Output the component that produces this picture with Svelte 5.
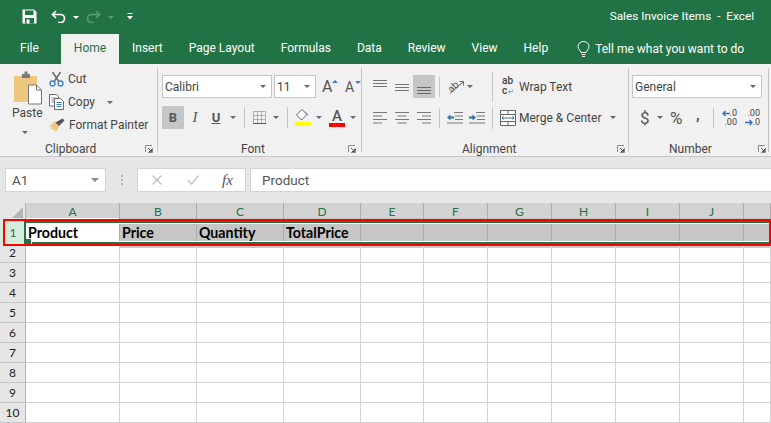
<script>
  const tabs = ['Insert', 'Page Layout', 'Formulas', 'Data', 'Review', 'View', 'Help'];
  const cols = [
    { n: 'A', w: 94, text: 'Product' },
    { n: 'B', w: 77, text: 'Price' },
    { n: 'C', w: 87, text: 'Quantity' },
    { n: 'D', w: 77, text: 'TotalPrice' },
    { n: 'E', w: 63, text: '' },
    { n: 'F', w: 64, text: '' },
    { n: 'G', w: 64, text: '' },
    { n: 'H', w: 64, text: '' },
    { n: 'I', w: 64, text: '' },
    { n: 'J', w: 64, text: '' },
    { n: '', w: 27, text: '' }
  ];
  const rows = [2, 3, 4, 5, 6, 7, 8, 9, 10];
  const template = '26px ' + cols.map((c) => c.w + 'px').join(' ');
</script>

{#snippet launcher()}
  <svg class="launcher" width="8" height="8" viewBox="0 0 8 8">
    <path d="M.5 7V.5H7M7.5 3v4.5H3" fill="none" stroke="#8a8a8a" />
    <path d="M3 3l3 3M4 6.5h2.5V4" fill="none" stroke="#555" />
  </svg>
{/snippet}

<div class="excel">
  <header class="titlebar">
    <div class="qat">
      <svg class="save" width="15" height="15" viewBox="0 0 15 15">
        <path d="M.5.5h11.500l2.500 2.500v11.500H.5z" fill="#fff" />
        <rect x="3" y="1.500" width="8.500" height="4.500" fill="#217346" />
        <rect x="3" y="9" width="9" height="5.500" fill="#217346" />
        <rect x="4.500" y="10.500" width="3" height="4" fill="#fff" />
      </svg>
      <svg class="undo" width="15" height="13" viewBox="0 0 15 13">
        <path d="M5 1L1.500 4.500 5 8M2 4.500h7.500a4 4 0 0 1 0 8H7" fill="none" stroke="#fff" stroke-width="1.700" />
      </svg>
      <i class="caret white"></i>
      <svg class="redo" width="15" height="13" viewBox="0 0 15 13">
        <path d="M10 1l3.500 3.500L10 8M13 4.500H5.500a4 4 0 0 0 0 8H8" fill="none" stroke="#5c9a78" stroke-width="1.700" />
      </svg>
      <i class="caret dim"></i>
      <svg class="custom" width="6" height="7" viewBox="0 0 6 7">
        <path d="M.5.5h5" stroke="#fff" />
        <path d="M0 3h6L3 6.500z" fill="#fff" />
      </svg>
    </div>
    <div class="doc">Sales Invoice Items &nbsp;-&nbsp; Excel</div>
  </header>

  <nav class="tabs">
    <span class="tab file">File</span>
    <span class="tab active">Home</span>
    {#each tabs as tab}
      <span class="tab">{tab}</span>
    {/each}
    <span class="tell">
      <svg width="13" height="17" viewBox="0 0 13 17">
        <path d="M4 11.500C3.500 9.500 1 8.500 1 5.500a5.500 5 0 0 1 11 0c0 3-2.500 4-3 6zM4.500 13.500h4M5 15.500h3" fill="none" stroke="#fff" />
      </svg>
      <span>Tell me what you want to do</span>
    </span>
  </nav>

  <section class="ribbon">
    <div class="group clipboard">
      <div class="body clip-body">
        <div class="paste">
          <svg width="29" height="35" viewBox="0 0 29 35">
            <path d="M1 6h23v26H1z" fill="#ecc77d" />
            <path d="M9 4h2.500V1.500h3V4H17v4H9z" fill="#7b7b7b" />
            <path d="M15.500 15h8l5 5v14h-13z" fill="#fff" stroke="#767676" />
            <path d="M23.500 15v5h5" fill="none" stroke="#767676" />
          </svg>
          <span class="txt">Paste</span>
          <i class="caret"></i>
        </div>
        <div class="clip-list">
          <div class="clip-item">
            <svg width="15" height="16" viewBox="0 0 15 16">
              <path d="M3.500 1l6 9M11.500 1l-6 9" stroke="#6a6a6a" stroke-width="1.500" fill="none" />
              <circle cx="3.500" cy="12.500" r="2.500" fill="none" stroke="#3f7fc0" stroke-width="1.300" />
              <circle cx="11.500" cy="12.500" r="2.500" fill="none" stroke="#3f7fc0" stroke-width="1.300" />
            </svg>
            <span class="txt">Cut</span>
          </div>
          <div class="clip-item">
            <svg width="15" height="16" viewBox="0 0 15 16">
              <path d="M.5.500h7l2 2V12H.5z" fill="#fff" stroke="#6a6a6a" />
              <path d="M2.500 4h4M2.500 6h4M2.500 8h4" stroke="#8a8a8a" />
              <path d="M5.500 4.500h6l3 3v8h-9z" fill="#fff" stroke="#6a6a6a" />
              <path d="M7.500 8.500h5M7.500 10.500h5M7.500 12.500h5" stroke="#3f7fc0" />
            </svg>
            <span class="txt">Copy</span>
            <i class="caret copy-caret"></i>
          </div>
          <div class="clip-item">
            <svg width="16" height="15" viewBox="0 0 16 15">
              <path d="M8.500 5L5.500 3.500 0 8.500l2 .5 2-1-2 3 2 .5 1.500-1 0 2.500 1.500.5 3-4z" fill="#ecc77d" />
              <path d="M6.500 4.500l3.500 3.500L15.500 2.500 13.500.5z" fill="#555" />
            </svg>
            <span class="txt">Format Painter</span>
          </div>
        </div>
      </div>
      <div class="label clip-label"><span>Clipboard</span>{@render launcher()}</div>
    </div>

    <div class="group font">
      <div class="body">
        <div class="row first">
          <div class="combo name"><span>Calibri</span><i class="caret"></i></div>
          <div class="combo size"><span>11</span><i class="caret"></i></div>
          <span class="grow">A<i class="up"></i></span>
          <span class="shrink">A<i class="down"></i></span>
        </div>
        <div class="row second">
          <span class="fmt on"><b>B</b></span>
          <span class="fmt"><em>I</em></span>
          <span class="fmt"><u>U</u></span>
          <i class="caret u-caret"></i>
          <i class="sep"></i>
          <svg class="borders" width="13" height="13" viewBox="0 0 13 13">
            <path d="M.5.500h12v12H.5zM.5 4.500h12M.5 8.500h12M4.500.5v12M8.500.5v12" fill="none" stroke="#777" stroke-dasharray="1 1" />
            <path d="M0 12.500h13" stroke="#555" />
          </svg>
          <i class="caret b-caret"></i>
          <i class="sep"></i>
          <svg class="fill" width="16" height="17" viewBox="0 0 16 17">
            <path d="M7 .5L1.500 6 6.500 11 12 5.500z" fill="#fff" stroke="#666" />
            <path d="M9 1.500l4 4-1 1z" fill="#3f7fc0" />
            <rect y="13" width="16" height="4" fill="#ffff00" />
          </svg>
          <i class="caret f-caret"></i>
          <span class="color">A</span>
          <i class="caret c-caret"></i>
        </div>
      </div>
      <div class="label font-label"><span>Font</span>{@render launcher()}</div>
    </div>

    <div class="group align">
      <div class="body">
        <div class="row first">
          <svg class="lines" width="14" height="8" viewBox="0 0 14 8"><path d="M0 .5h14M0 3.500h14M0 6.500h14" stroke="#777" /></svg>
          <svg class="lines mid" width="14" height="8" viewBox="0 0 14 8"><path d="M0 .5h14M0 3.500h14M0 6.500h14" stroke="#777" /></svg>
          <span class="bottom-btn"><svg width="14" height="8" viewBox="0 0 14 8"><path d="M0 .5h14M0 3.500h14M0 6.500h14" stroke="#666" /></svg></span>
          <i class="sep a-sep"></i>
          <svg class="orient" width="18" height="17" viewBox="0 0 18 17">
            <path d="M3 15.500L16 4M12.500 3.500H16.500V7.500" stroke="#666" fill="none" />
            <text x="0" y="12" transform="rotate(-45 6 8)" class="ab">ab</text>
          </svg>
          <i class="caret o-caret"></i>
          <i class="sep w-sep"></i>
          <span class="wrap-ic">ab<br />c<span class="wrap-arrow">↵</span></span>
          <span class="txt wrap-txt">Wrap Text</span>
        </div>
        <div class="row second al-second">
          <svg width="14" height="12" viewBox="0 0 14 12"><path d="M0 .5h14M0 4h9M0 7.500h14M0 11h9" stroke="#777" /></svg>
          <svg class="al-c" width="14" height="12" viewBox="0 0 14 12"><path d="M0 .5h14M2.500 4h9M0 7.500h14M2.500 11h9" stroke="#777" /></svg>
          <svg class="al-r" width="14" height="12" viewBox="0 0 14 12"><path d="M0 .5h14M5 4h9M0 7.500h14M5 11h9" stroke="#777" /></svg>
          <i class="sep a-sep2"></i>
          <svg class="ind" width="16" height="12" viewBox="0 0 16 12">
            <path d="M7 .5h9M8 4h8M8 7.500h8M0 11h16" stroke="#777" />
            <path d="M0 5.500L3.500 2.500v2H7v2H3.500v2z" fill="#2f6fb3" />
          </svg>
          <svg class="ind2" width="16" height="12" viewBox="0 0 16 12">
            <path d="M7 .5h9M8 4h8M8 7.500h8M0 11h16" stroke="#777" />
            <path d="M7 5.500L3.500 2.500v2H0v2h3.500v2z" fill="#2f6fb3" />
          </svg>
          <i class="sep w-sep2"></i>
          <svg class="merge" width="16" height="16" viewBox="0 0 16 16">
            <path d="M.5.500h15v15H.5zM.5 4.500h15M.5 11.500h15M8 .5v4M8 11.500v4" fill="#fff" stroke="#666" />
            <path d="M2 8h12M3.500 6.500L2 8l1.500 1.500M12.500 6.500L14 8l-1.500 1.500" fill="none" stroke="#2f6fb3" />
          </svg>
          <span class="txt merge-txt">Merge &amp; Center</span>
          <i class="caret m-caret"></i>
        </div>
      </div>
      <div class="label align-label"><span>Alignment</span>{@render launcher()}</div>
    </div>

    <div class="group number">
      <div class="body">
        <div class="row first">
          <div class="combo general"><span>General</span><i class="caret"></i></div>
        </div>
        <div class="row second num-second">
          <span class="dollar">$</span>
          <i class="caret d-caret"></i>
          <span class="pct">%</span>
          <span class="comma">,</span>
          <i class="sep n-sep"></i>
          <span class="dec">
            <span class="dec-line"><svg width="8" height="7" viewBox="0 0 8 7"><path d="M8 3.500H1M3.500 1L1 3.500 3.500 6" fill="none" stroke="#2f6fb3" stroke-width="1.300" /></svg>.0</span>
            <span class="dec-line">.00</span>
          </span>
          <span class="dec">
            <span class="dec-line">.00</span>
            <span class="dec-line"><svg width="8" height="7" viewBox="0 0 8 7"><path d="M0 3.500h7M4.500 1L7 3.500 4.500 6" fill="none" stroke="#2f6fb3" stroke-width="1.300" /></svg>.0</span>
          </span>
        </div>
      </div>
      <div class="label number-label"><span>Number</span>{@render launcher()}</div>
    </div>
  </section>

  <div class="formula">
    <div class="namebox"><span>A1</span><i class="caret big"></i></div>
    <span class="dots"></span>
    <div class="fx-btns">
      <svg width="10" height="10" viewBox="0 0 10 10"><path d="M.5.5l9 9M9.500.5l-9 9" stroke="#c4c4c4" stroke-width="1.500" /></svg>
      <svg width="12" height="10" viewBox="0 0 12 10"><path d="M.5 5l4 4 7-8.500" fill="none" stroke="#c4c4c4" stroke-width="1.500" /></svg>
      <span class="fx">fx</span>
    </div>
    <div class="input">Product</div>
  </div>

  <div class="sheet">
    <div class="grid head" style="grid-template-columns: {template}">
      <div class="corner"><i></i></div>
      {#each cols as c}
        <div class="colhead">{c.n}</div>
      {/each}
    </div>
    <div class="grid firstrow" style="grid-template-columns: {template}">
      <div class="rowhead sel">1</div>
      {#each cols as c, i}
        <div class="cell shaded" class:a1={i === 0}>{c.text}</div>
      {/each}
    </div>
    {#each rows as r}
      <div class="grid" style="grid-template-columns: {template}">
        <div class="rowhead">{r}</div>
        {#each cols as c}
          <div class="cell"></div>
        {/each}
      </div>
    {/each}
    <div class="selection"><i></i></div>
    <div class="redbox"></div>
  </div>
</div>

<style>
  :global(body) {
    margin: 0;
    overflow: hidden;
  }

  .excel {
    width: 771px;
    height: 423px;
    overflow: hidden;
    font-family: "Roboto", "Open Sans", sans-serif;
    font-size: 12px;
    color: #444;
    background: #fff;
  }

  .caret {
    display: block;
    width: 0;
    height: 0;
    border-left: 3px solid transparent;
    border-right: 3px solid transparent;
    border-top: 3px solid #666;
  }
  .caret.white { border-top-color: #fff; margin: 2px 0 0 7px; }
  .caret.dim { border-top-color: #5c9a78; margin: 2px 0 0 7px; }
  .caret.big { border-left-width: 4px; border-right-width: 4px; border-top-width: 4px; border-top-color: #8a8a8a; }

  .titlebar {
    height: 34px;
    box-sizing: border-box;
    padding: 0 17px 2px 22px;
    background: #217346;
    display: flex;
    align-items: center;
    justify-content: space-between;
    color: #fff;
  }
  .qat { display: flex; align-items: center; }
  .undo { margin-left: 14px; }
  .redo { margin-left: 7px; }
  .custom { margin-left: 13px; }
  .doc { white-space: nowrap; font-size: 11.8px; }

  .tabs {
    height: 30px;
    background: #217346;
    display: flex;
    color: #fff;
    line-height: 29px;
    white-space: nowrap;
  }
  .tab { padding: 0 13px; }
  .file { width: 61px; padding: 0 0 0 20px; box-sizing: border-box; }
  .active {
    background: #f1f1f1;
    color: #217346;
    width: 58px;
    padding: 0;
    text-align: center;
  }
  .tell {
    display: flex;
    align-items: center;
    gap: 5px;
    margin-left: 16px;
  }

  .ribbon {
    box-sizing: border-box;
    background: #f1f1f1;
    border-bottom: 1px solid #c6c6c6;
    display: flex;
    padding-top: 4px;
    height: 93px;
  }
  .group {
    height: 84px;
    box-sizing: border-box;
    border-right: 1px solid #c6c6c6;
    display: flex;
    flex-direction: column;
    justify-content: space-between;
    flex: none;
  }
  .clipboard { width: 158px; }
  .font { width: 204px; padding-left: 4px; }
  .align { width: 267px; padding-left: 11px; }
  .number { width: 140px; padding-left: 3px; }

  .label {
    height: 16px;
    margin-bottom: -5px;
    display: flex;
    align-items: center;
    color: #444;
  }
  .launcher { margin-left: auto; margin-top: -1px; }
  .clip-label { padding: 0 4px 0 45px; }
  .font-label { padding: 0 5px 0 79px; }
  .align-label { padding: 0 3px 0 89px; }
  .number-label { padding: 0 2px 0 37px; }

  .body { padding-top: 7px; }
  .row { display: flex; align-items: center; height: 23px; }
  .row.second { margin-top: 8px; }
  .txt { color: #444; white-space: nowrap; }

  .clip-body { display: flex; padding-top: 2px; }
  .paste {
    width: 50px;
    padding-left: 13px;
    box-sizing: border-box;
    display: flex;
    flex-direction: column;
    align-items: flex-start;
  }
  .paste .txt { margin: -1px 0 0 -1px; line-height: 18px; }
  .paste .caret { margin: 9px 0 0 9px; }
  .clip-list { display: flex; flex-direction: column; gap: 7px; margin: 1px 0 0 -1px; }
  .clip-item { display: flex; align-items: center; gap: 4px; height: 16px; }
  .copy-caret { margin-left: 8px; }

  .combo {
    box-sizing: border-box;
    height: 23px;
    background: #fff;
    border: 1px solid #c6c6c6;
    display: flex;
    align-items: center;
    justify-content: space-between;
    padding: 0 5px 0 2px;
    color: #444;
  }
  .name { width: 110px; }
  .size { width: 42px; margin-left: 2px; }
  .general { width: 130px; }

  .grow, .shrink { position: relative; color: #555; line-height: 1; }
  .grow { font-size: 16px; margin-left: 6px; width: 16px; }
  .shrink { font-size: 14px; margin-left: 7px; width: 16px; }
  .up, .down { position: absolute; top: 1px; right: 0; width: 0; height: 0; border-left: 3px solid transparent; border-right: 3px solid transparent; }
  .up { border-bottom: 3px solid #3f7fc0; }
  .down { border-top: 3px solid #3f7fc0; }

  .fmt {
    width: 20px;
    height: 23px;
    display: flex;
    align-items: center;
    justify-content: center;
    font-size: 13px;
    margin-right: 1px;
    color: #555;
  }
  .fmt.on { background: #c6c6c6; width: 22px; }
  .fmt em { font-family: "Liberation Serif", serif; font-size: 15px; }
  .fmt u { font-weight: 700; }
  .u-caret { margin-left: 3px; }
  .sep { display: block; width: 1px; height: 21px; background: #c6c6c6; }
  .second .sep { margin-left: 8px; }
  .borders { margin-left: 8px; }
  .b-caret { margin-left: 7px; }
  .fill { margin-left: 7px; }
  .f-caret { margin-left: 5px; }
  .color {
    width: 16px;
    margin-left: 7px;
    text-align: center;
    font-size: 15px;
    font-weight: 500;
    line-height: 14px;
    border-bottom: 4px solid #ff0000;
    color: #555;
  }
  .c-caret { margin-left: 5px; }

  .lines.mid { margin-left: 8px; margin-top: 3px; }
  .lines { margin-top: -6px; }
  .bottom-btn {
    width: 22px;
    height: 23px;
    margin-left: 4px;
    background: #c6c6c6;
    display: flex;
    align-items: flex-end;
    justify-content: center;
    padding-bottom: 3px;
    box-sizing: border-box;
  }
  .sep.a-sep { margin-left: 4px; height: 20px; }
  .orient { margin-left: 7px; overflow: visible; }
  .ab { font-size: 10px; fill: #555; }
  .o-caret { margin-left: 2px; }
  .sep.w-sep { margin-left: 19px; height: 30px; }
  .wrap-ic { margin-left: 9px; font-size: 10px; line-height: 10px; width: 17px; color: #444; font-weight: 500; }
  .wrap-arrow { color: #3f7fc0; font-size: 7px; margin-left: 1px; }
  .second .sep.a-sep2 { margin-left: 8px; height: 20px; }
  .al-c, .al-r { margin-left: 8px; }
  .ind { margin-left: 7px; }
  .ind2 { margin-left: 6px; }
  .second .sep.w-sep2 { margin-left: 7px; height: 22px; }
  .merge { margin-left: 7px; }
  .merge-txt { margin-left: 3px; }
  .m-caret { margin-left: 9px; }

  .num-second { color: #555; }
  .dollar { margin-left: 8px; font-size: 17px; width: 8px; }
  .d-caret { margin-left: 9px; }
  .pct { margin-left: 7px; font-size: 17px; width: 15px; }
  .comma { margin-left: 11px; font-size: 15px; font-weight: 700; width: 5px; margin-top: -6px; }
  .second .sep.n-sep { margin-left: 12px; height: 20px; }
  .dec { display: flex; flex-direction: column; align-items: flex-end; font-size: 9px; line-height: 9px; margin-left: 6px; width: 17px; color: #444; }
  .dec-line { display: flex; align-items: center; height: 9px; }

  .formula {
    height: 46px;
    box-sizing: border-box;
    background: #e6e6e6;
    display: flex;
    padding: 11px 0 11px 5px;
    color: #555;
  }
  .namebox {
    width: 101px;
    box-sizing: border-box;
    background: #fff;
    border: 1px solid #d4d4d4;
    display: flex;
    align-items: center;
    justify-content: space-between;
    padding: 0 6px;
    font-size: 13.5px;
  }
  .dots {
    width: 2px;
    height: 10px;
    margin: 7px 14px 0 15px;
    background: repeating-linear-gradient(#b4b4b4 0 2px, transparent 2px 4px);
  }
  .fx-btns {
    width: 109px;
    box-sizing: border-box;
    background: #fff;
    border: 1px solid #d4d4d4;
    display: flex;
    align-items: center;
    padding-left: 14px;
    gap: 25px;
  }
  .fx { font-family: "Liberation Serif", serif; font-style: italic; font-size: 15px; color: #555; margin-left: -2px; }
  .input {
    flex: 1;
    margin-left: 4px;
    background: #fff;
    border: 1px solid #d4d4d4;
    border-right: 0;
    padding-left: 11px;
    display: flex;
    align-items: center;
    font-size: 13.5px;
  }

  .sheet { position: relative; }
  .grid { display: grid; height: 20px; }
  .head { height: 15px; }
  .firstrow { height: 25px; }
  .corner { background: #e6e6e6; border-right: 1px solid #b4b4b4; position: relative; overflow: hidden; }
  .corner i {
    position: absolute;
    right: 2px;
    bottom: 2px;
    border-left: 11px solid transparent;
    border-bottom: 11px solid #b4b4b4;
  }
  .colhead {
    background: #d2d2d2;
    border-right: 1px solid #ababab;
    box-sizing: border-box;
    text-align: center;
    line-height: 17px;
    color: #217346;
    font-size: 12px;
    font-family: "Lato", sans-serif;
  }
  .rowhead {
    box-sizing: border-box;
    text-align: center;
    line-height: 19px;
    background: #e6e6e6;
    border-right: 1px solid #b4b4b4;
    border-bottom: 1px solid #c6c6c6;
    font-size: 12px;
    font-family: "Lato", sans-serif;
    color: #222;
  }
  .rowhead.sel {
    background: #d3ecdc;
    color: #217346;
    line-height: 29px;
    border-right: 0;
  }
  .cell {
    box-sizing: border-box;
    border-right: 1px solid #d4d4d4;
    border-bottom: 1px solid #d4d4d4;
    white-space: nowrap;
  }
  .cell.shaded {
    background: #c6c6c6;
    border-right-color: #ababab;
    border-bottom: 0;
    color: #000;
    font-family: "Lato", sans-serif;
    font-weight: 700;
    font-size: 14.2px;
    line-height: 29px;
    padding-left: 2px;
  }
  .cell.a1 { background: #fff; }
  .selection {
    position: absolute;
    left: 24px;
    top: 18px;
    width: 747px;
    height: 23px;
    box-sizing: border-box;
    border: 2px solid #217346;
    border-right: 0;
    box-shadow: inset 0 0 0 1px #fff;
  }
  .selection i {
    position: absolute;
    left: -1px;
    bottom: -2px;
    width: 6px;
    height: 5px;
    background: #217346;
    border-right: 1px solid #fff;
  }
  .redbox {
    position: absolute;
    left: 3px;
    top: 16px;
    width: 768px;
    height: 27px;
    box-sizing: border-box;
    border: 2px solid #ff0000;
  }
</style>
